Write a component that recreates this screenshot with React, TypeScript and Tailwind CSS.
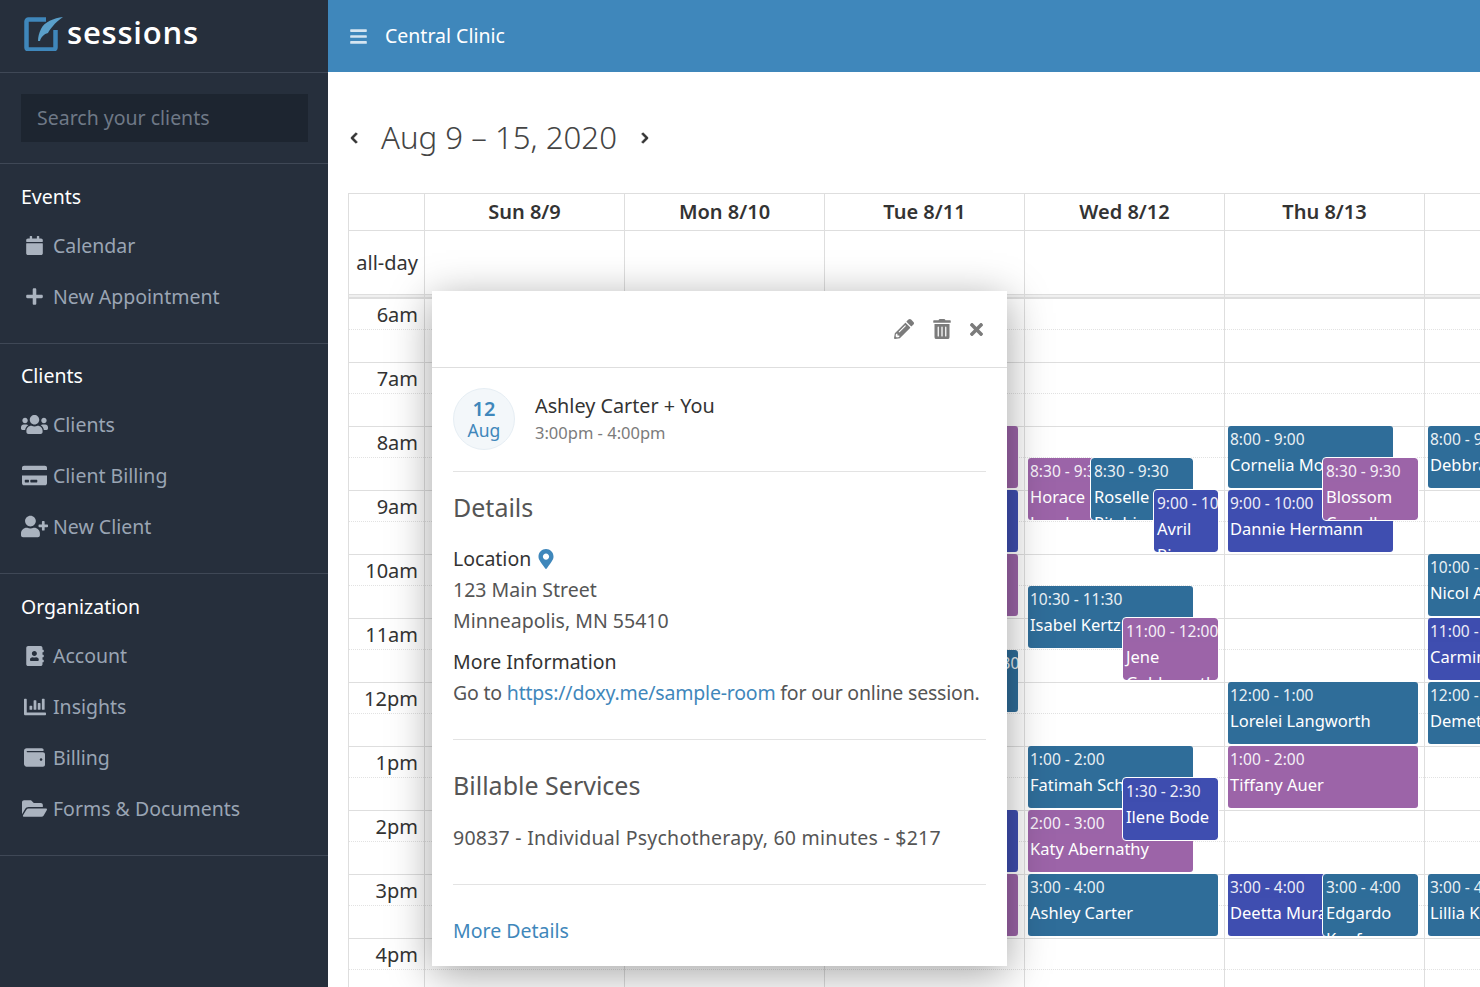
import type { ReactNode } from 'react';
import {
  FaAddressBook,
  FaBars,
  FaCalendar,
  FaChartBar,
  FaChevronLeft,
  FaChevronRight,
  FaCreditCard,
  FaFolderOpen,
  FaMapMarkerAlt,
  FaPencilAlt,
  FaPlus,
  FaTimes,
  FaTrashAlt,
  FaUserPlus,
  FaUsers,
  FaWallet,
} from 'react-icons/fa';

type Tone = 'teal' | 'indigo' | 'purple';

interface CalEvent {
  left: number;
  width: number;
  top: number;
  time: string;
  name: string;
  tone: Tone;
  ring?: boolean;
}

const toneClass: Record<Tone, string> = {
  teal: 'bg-[#2f6d99]',
  indigo: 'bg-[#3f4eb0]',
  purple: 'bg-[#9c64a8]',
};

const navSections: { title: string; items: { label: string; icon: ReactNode }[] }[] = [
  {
    title: 'Events',
    items: [
      { label: 'Calendar', icon: <FaCalendar className="text-[19px]" /> },
      { label: 'New Appointment', icon: <FaPlus className="text-[19px]" /> },
    ],
  },
  {
    title: 'Clients',
    items: [
      { label: 'Clients', icon: <FaUsers className="text-[27px]" /> },
      { label: 'Client Billing', icon: <FaCreditCard className="text-[25px]" /> },
      { label: 'New Client', icon: <FaUserPlus className="text-[27px]" /> },
    ],
  },
  {
    title: 'Organization',
    items: [
      { label: 'Account', icon: <FaAddressBook className="text-[20px]" /> },
      { label: 'Insights', icon: <FaChartBar className="text-[22px]" /> },
      { label: 'Billing', icon: <FaWallet className="text-[21px]" /> },
      { label: 'Forms & Documents', icon: <FaFolderOpen className="text-[25px]" /> },
    ],
  },
];

const hours = ['6am', '7am', '8am', '9am', '10am', '11am', '12pm', '1pm', '2pm', '3pm', '4pm'];
const days = ['Sun 8/9', 'Mon 8/10', 'Tue 8/11', 'Wed 8/12', 'Thu 8/13', 'Fri 8/14'];

// top is measured from the 6am line, left from the day column edge
const eventsByDay: CalEvent[][] = [
  [],
  [],
  [
    { left: 60, width: 133, top: 128, time: '8:00 - 9:00', name: 'Ruthe Olson', tone: 'purple' },
    { left: 91, width: 102, top: 192, time: '9:00 - 10:00', name: 'Lyn Hayes', tone: 'indigo' },
    { left: 60, width: 133, top: 256, time: '10:00 - 11:00', name: 'Mae Lowe', tone: 'purple' },
    { left: 100, width: 93, top: 352, time: '11:30 - 12:30', name: 'Ida Roy', tone: 'teal' },
    { left: 60, width: 133, top: 512, time: '2:00 - 3:00', name: 'Sal Dietz', tone: 'indigo' },
    { left: 60, width: 133, top: 576, time: '3:00 - 4:00', name: 'Ona Kirk', tone: 'purple' },
  ],
  [
    { left: 3, width: 66, top: 160, time: '8:30 - 9:30', name: 'Horace Leach', tone: 'purple' },
    { left: 66, width: 102, top: 160, time: '8:30 - 9:30', name: 'Roselle Ritchie', tone: 'teal', ring: true },
    { left: 129, width: 64, top: 192, time: '9:00 - 10:00', name: 'Avril Rios', tone: 'indigo', ring: true },
    { left: 3, width: 165, top: 288, time: '10:30 - 11:30', name: 'Isabel Kertzmann', tone: 'teal' },
    { left: 98, width: 95, top: 320, time: '11:00 - 12:00', name: 'Jene Goldsworthy', tone: 'purple', ring: true },
    { left: 3, width: 165, top: 448, time: '1:00 - 2:00', name: 'Fatimah Schmidt', tone: 'teal' },
    { left: 3, width: 165, top: 512, time: '2:00 - 3:00', name: 'Katy Abernathy', tone: 'purple' },
    { left: 98, width: 95, top: 480, time: '1:30 - 2:30', name: 'Ilene Bode', tone: 'indigo', ring: true },
    { left: 3, width: 190, top: 576, time: '3:00 - 4:00', name: 'Ashley Carter', tone: 'teal' },
  ],
  [
    { left: 3, width: 165, top: 128, time: '8:00 - 9:00', name: 'Cornelia Moore', tone: 'teal' },
    { left: 3, width: 165, top: 192, time: '9:00 - 10:00', name: 'Dannie Hermann', tone: 'indigo' },
    { left: 98, width: 95, top: 160, time: '8:30 - 9:30', name: 'Blossom Carroll', tone: 'purple', ring: true },
    { left: 3, width: 190, top: 384, time: '12:00 - 1:00', name: 'Lorelei Langworth', tone: 'teal' },
    { left: 3, width: 190, top: 448, time: '1:00 - 2:00', name: 'Tiffany Auer', tone: 'purple' },
    { left: 3, width: 165, top: 576, time: '3:00 - 4:00', name: 'Deetta Murazik', tone: 'indigo' },
    { left: 98, width: 95, top: 576, time: '3:00 - 4:00', name: 'Edgardo Kaufman', tone: 'teal', ring: true },
  ],
  [
    { left: 3, width: 190, top: 128, time: '8:00 - 9:00', name: 'Debbra Wolf', tone: 'teal' },
    { left: 3, width: 190, top: 256, time: '10:00 - 11:00', name: 'Nicol Adams', tone: 'teal' },
    { left: 3, width: 190, top: 320, time: '11:00 - 12:00', name: 'Carmine Bell', tone: 'indigo' },
    { left: 3, width: 190, top: 384, time: '12:00 - 1:00', name: 'Demetra Cole', tone: 'teal' },
    { left: 3, width: 190, top: 576, time: '3:00 - 4:00', name: 'Lillia Kemp', tone: 'teal' },
  ],
];

function Logo() {
  return (
    <svg width="40" height="36" viewBox="0 0 40 36" fill="none">
      <path
        d="M22 4.5H4.5a2 2 0 0 0-2 2v26a2 2 0 0 0 2 2h25a2 2 0 0 0 2-2V15"
        stroke="#3f87bb"
        strokeWidth="4.5"
      />
      <path
        d="M39 2C30 3 20 7 17 14C15 18 14 22 14 26L16 26C17 22 20 19 24 18C25 16 27 13 29 11C31 8 35 5 39 2Z"
        fill="#5a9fc9"
      />
    </svg>
  );
}

function EventCard({ event }: { event: CalEvent }) {
  return (
    <div
      className={`absolute h-[62px] overflow-hidden rounded-[3px] text-white ${toneClass[event.tone]} ${
        event.ring ? 'pl-[3px] pr-[2px] outline outline-1 outline-white' : 'px-[2px]'
      }`}
      style={{ left: event.left, width: event.width, top: event.top }}
    >
      <div className="whitespace-nowrap text-[15.5px] leading-[26px] opacity-90">{event.time}</div>
      <div className="text-[16.5px] leading-[26px]">{event.name}</div>
    </div>
  );
}

function Slots() {
  return (
    <>
      {hours.map((h) => (
        <div key={h} className="h-[64px] border-t border-[#dedede]">
          <div className="h-[31px] border-b border-dotted border-[#e2e2e2]" />
        </div>
      ))}
    </>
  );
}

function Sidebar() {
  return (
    <aside className="w-[328px] shrink-0 bg-[#262f3c]">
      <div className="flex h-[73px] items-center gap-[3px] border-b border-[#3f4856] pb-[7px] pl-[24px]">
        <Logo />
        <span className="font-['Open_Sans',sans-serif] text-[31px] font-[550] leading-none tracking-[0.8px] text-white">
          sessions
        </span>
      </div>
      <div className="h-[91px] border-b border-[#3f4856] pl-[21px] pr-[20px] pt-[21px]">
        <div className="flex h-[48px] items-center bg-[#1d2530] pl-[16px] text-[19.5px] text-[#6f7987]">
          Search your clients
        </div>
      </div>
      {navSections.map((section) => (
        <section
          key={section.title}
          className="border-b border-[#3f4856] pb-[21px] pl-[21px] pt-[20px] first-of-type:pt-[21px] last-of-type:pt-[21px]"
        >
          <h2 className="text-[19.5px] font-normal leading-[24px] text-white">{section.title}</h2>
          <ul className="mt-[11px]">
            {section.items.map((item) => (
              <li key={item.label} className="flex h-[51px] items-center text-[19.5px] text-[#9aa5b4]">
                <span className="flex w-[27px] justify-center text-[#aab3bf]">{item.icon}</span>
                <span className="ml-[5px]">{item.label}</span>
              </li>
            ))}
          </ul>
        </section>
      ))}
    </aside>
  );
}

function Popover() {
  return (
    <div className="absolute left-[104px] top-[291px] z-20 h-[675px] w-[575px] bg-white text-[#3a3a3a] shadow-[0_8px_40px_rgba(0,0,0,0.36)]">
      <div className="flex h-[77px] items-center justify-end border-b border-[#dedede] pr-[21px] text-[#7b7b7b]">
        <FaPencilAlt className="text-[20px]" />
        <FaTrashAlt className="ml-[18px] text-[20px]" />
        <FaTimes className="ml-[15px] text-[19px]" />
      </div>
      <div className="px-[21px]">
        <div className="flex h-[104px] items-center gap-[20px] border-b border-[#e3e3e3] pb-[2px]">
          <div className="flex h-[62px] w-[62px] flex-col items-center justify-center rounded-full border border-[#e6eef4] bg-[#f3f7fa] text-[#3f87bb]">
            <span className="text-[20px] font-semibold leading-[22px]">12</span>
            <span className="text-[17.5px] leading-[20px]">Aug</span>
          </div>
          <div>
            <div className="text-[19.8px] leading-[28px] text-[#333]">Ashley Carter + You</div>
            <div className="text-[16.5px] leading-[26px] text-[#7b7b7b]">3:00pm - 4:00pm</div>
          </div>
        </div>
        <div className="h-[268px] border-b border-[#e3e3e3] pt-[18px] text-[19.5px] leading-[31px]">
          <h3 className="text-[25px] font-normal leading-[34px] text-[#555]">Details</h3>
          <div className="mt-[19px] flex items-center gap-[5px] text-[#333]">
            Location <FaMapMarkerAlt className="text-[20px] text-[#3f87bb]" />
          </div>
          <div className="text-[#555]">123 Main Street</div>
          <div className="text-[#555]">Minneapolis, MN 55410</div>
          <div className="mt-[10px] text-[#333]">More Information</div>
          <div className="whitespace-nowrap tracking-[-0.2px] text-[#555]">
            Go to <span className="text-[#3f87bb]">https://doxy.me/sample-room</span> for our online session.
          </div>
        </div>
        <div className="h-[145px] border-b border-[#e3e3e3] pt-[28px]">
          <h3 className="text-[25px] font-normal leading-[34px] text-[#555]">Billable Services</h3>
          <div className="mt-[20px] text-[19.5px] leading-[31px] tracking-[0.25px] text-[#555]">
            90837 - Individual Psychotherapy, 60 minutes - $217
          </div>
        </div>
        <div className="pt-[30px] text-[19.5px] leading-[31px] text-[#3f87bb]">More Details</div>
      </div>
    </div>
  );
}

export default function App() {
  return (
    <div className="flex h-[987px] w-[1480px] overflow-hidden bg-white font-['Noto_Sans',sans-serif]">
      <Sidebar />
      <main className="relative min-w-0 flex-1 overflow-hidden">
        <header className="flex h-[72px] items-center gap-[17px] bg-[#3f87bb] pl-[21px] text-white">
          <FaBars className="text-[19px] text-[#d5e5f1]" />
          <span className="text-[19.5px]">Central Clinic</span>
        </header>

        <div className="flex h-[121px] items-center pb-[10px] pl-[20px] pt-[20px] text-[#333]">
          <FaChevronLeft className="stroke-current stroke-[40] text-[12px]" />
          <h1 className="ml-[21px] text-[31.2px] font-light text-[#444]">Aug 9 – 15, 2020</h1>
          <FaChevronRight className="ml-[22px] stroke-current stroke-[40] text-[12px]" />
        </div>

        <div className="ml-[20px] flex w-[1276px] border-l border-t border-[#dedede] text-[#333]">
          <div className="w-[75px] shrink-0">
            <div className="h-[37px] border-b border-[#dedede]" />
            <div className="flex h-[63px] items-center justify-end pr-[6px] text-[20px]">all-day</div>
            <div className="h-[4px] border-y border-[#dedede] bg-[#f0f0f0]" />
            <div className="relative">
              <Slots />
              <div className="absolute inset-x-0 top-0">
                {hours.map((h) => (
                  <div key={h} className="h-[64px] pr-[6px] pt-[2px] text-right text-[20px] leading-[30px]">
                    {h}
                  </div>
                ))}
              </div>
            </div>
          </div>
          {days.map((day, i) => (
            <div key={day} className="w-[200px] shrink-0 border-l border-[#dedede]">
              <div className="flex h-[37px] items-center justify-center border-b border-[#dedede] text-[20px] font-semibold">
                {day}
              </div>
              <div className="h-[63px]" />
              <div className="h-[4px] border-y border-[#dedede] bg-[#f0f0f0]" />
              <div className="relative">
                <Slots />
                {eventsByDay[i].map((event) => (
                  <EventCard key={event.name} event={event} />
                ))}
              </div>
            </div>
          ))}
        </div>

        <Popover />
      </main>
    </div>
  );
}
